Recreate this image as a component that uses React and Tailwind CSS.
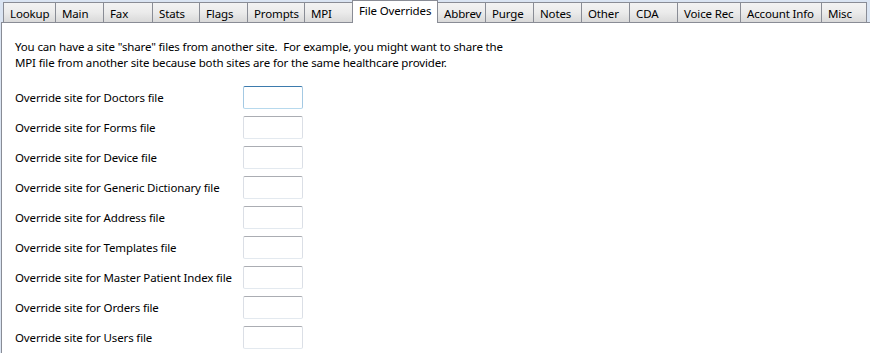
import React from "react";

const tabs = [
  ["Lookup", 53],
  ["Main", 49],
  ["Fax", 50],
  ["Stats", 48],
  ["Flags", 49],
  ["Prompts", 58],
  ["MPI", 49],
  ["File Overrides", 86, true],
  ["Abbrev", 49],
  ["Purge", 49],
  ["Notes", 49],
  ["Other", 49],
  ["CDA", 49],
  ["Voice Rec", 64],
  ["Account Info", 82],
  ["Misc", 46],
];

const rows = [
  "Override site for Doctors file",
  "Override site for Forms file",
  "Override site for Device file",
  "Override site for Generic Dictionary file",
  "Override site for Address file",
  "Override site for Templates file",
  "Override site for Master Patient Index file",
  "Override site for Orders file",
  "Override site for Users file",
];

export default function App() {
  return (
    <div
      className="w-[870px] h-[353px] overflow-hidden bg-[#dae4f2] text-[11.5px] tracking-[-0.14px] text-black"
      style={{ fontFamily: '"Noto Sans", "Open Sans", sans-serif' }}
    >
      <div className="flex items-end h-[22px] pl-[3px]">
        {tabs.map(([label, w, active], i) =>
          active ? (
            <div
              key={label}
              className="relative z-10 -ml-px h-[23px] -mb-px box-border border border-b-0 border-[#898c95] bg-white pl-[6px] pt-[2px] leading-[16px] whitespace-nowrap"
              style={{ width: w }}
            >
              {label}
            </div>
          ) : (
            <div
              key={label}
              className={`${i === 0 ? "" : "-ml-px"} h-[20px] box-border border border-b-0 border-[#898c95] bg-gradient-to-b from-[#f3f3f3] via-[#ebebeb] to-[#d9d9d9] pl-[6px] pt-[3px] leading-[15px] whitespace-nowrap`}
              style={{ width: w }}
            >
              {label}
            </div>
          )
        )}
      </div>
      <div className="ml-px h-[331px] border-t border-l border-[#898c95] bg-white pl-[13px] pt-[16px]">
        <p className="leading-[16px]">
          You can have a site "share" files from another site.&nbsp; For example, you might want to share the
          <br />
          MPI file from another site because both sites are for the same healthcare provider.
        </p>
        <div className="mt-[15px] flex flex-col gap-[7px]">
          {rows.map((label, i) => (
            <div key={label} className="flex items-center h-[23px]">
              <div className="w-[228px] whitespace-nowrap">{label}</div>
              <div
                className={
                  i === 0
                    ? "w-[60px] h-[23px] box-border rounded-[2px] border border-t-[#3d7bad] border-x-[#a4c9e3] border-b-[#b7d9ed] bg-white"
                    : "w-[60px] h-[23px] box-border rounded-[2px] border border-t-[#abadb3] border-x-[#dbdfe6] border-b-[#e3e9ef] bg-white"
                }
              />
            </div>
          ))}
        </div>
      </div>
    </div>
  );
}
